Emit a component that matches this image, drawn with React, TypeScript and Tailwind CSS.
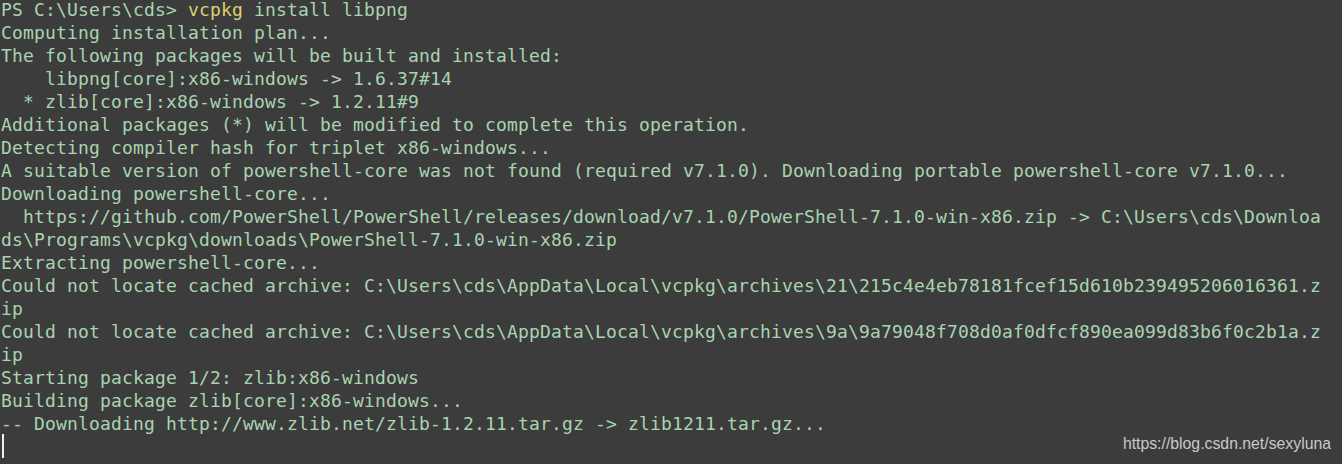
import React from "react";

const lines: string[] = [
  "Computing installation plan...",
  "The following packages will be built and installed:",
  "    libpng[core]:x86-windows -> 1.6.37#14",
  "  * zlib[core]:x86-windows -> 1.2.11#9",
  "Additional packages (*) will be modified to complete this operation.",
  "Detecting compiler hash for triplet x86-windows...",
  "A suitable version of powershell-core was not found (required v7.1.0). Downloading portable powershell-core v7.1.0...",
  "Downloading powershell-core...",
  "  https://github.com/PowerShell/PowerShell/releases/download/v7.1.0/PowerShell-7.1.0-win-x86.zip -> C:\\Users\\cds\\Downloa",
  "ds\\Programs\\vcpkg\\downloads\\PowerShell-7.1.0-win-x86.zip",
  "Extracting powershell-core...",
  "Could not locate cached archive: C:\\Users\\cds\\AppData\\Local\\vcpkg\\archives\\21\\215c4e4eb78181fcef15d610b239495206016361.z",
  "ip",
  "Could not locate cached archive: C:\\Users\\cds\\AppData\\Local\\vcpkg\\archives\\9a\\9a79048f708d0af0dfcf890ea099d83b6f0c2b1a.z",
  "ip",
  "Starting package 1/2: zlib:x86-windows",
  "Building package zlib[core]:x86-windows...",
  "-- Downloading http://www.zlib.net/zlib-1.2.11.tar.gz -> zlib1211.tar.gz...",
];

export default function App() {
  return (
    <div className="relative h-[464px] w-[1342px] overflow-hidden bg-[#3c3c3c]">
      <div className="mt-[-2px] flex flex-col pl-[1px] font-['DejaVu_Sans_Mono',monospace] text-[18px] leading-[23px] tracking-[0.164px] text-[#a9d4b1]">
        <div className="whitespace-pre">
          PS C:\Users\cds&gt; <span className="text-[#dcd36b]">vcpkg</span> install libpng
        </div>
        {lines.map((l, i) => (
          <div key={i} className="whitespace-pre">
            {l}
          </div>
        ))}
        <div className="h-[23px]">
          <div className="ml-[1px] mt-[-1px] h-[24px] w-[2px] bg-[#f0f0f0]" />
        </div>
      </div>
      <div className="absolute bottom-[11px] right-[11px] font-['Liberation_Sans',Arial,sans-serif] text-[15.8px] leading-[18px] text-[#c8c8c8]">
        https://blog.csdn.net/sexyluna
      </div>
    </div>
  );
}
